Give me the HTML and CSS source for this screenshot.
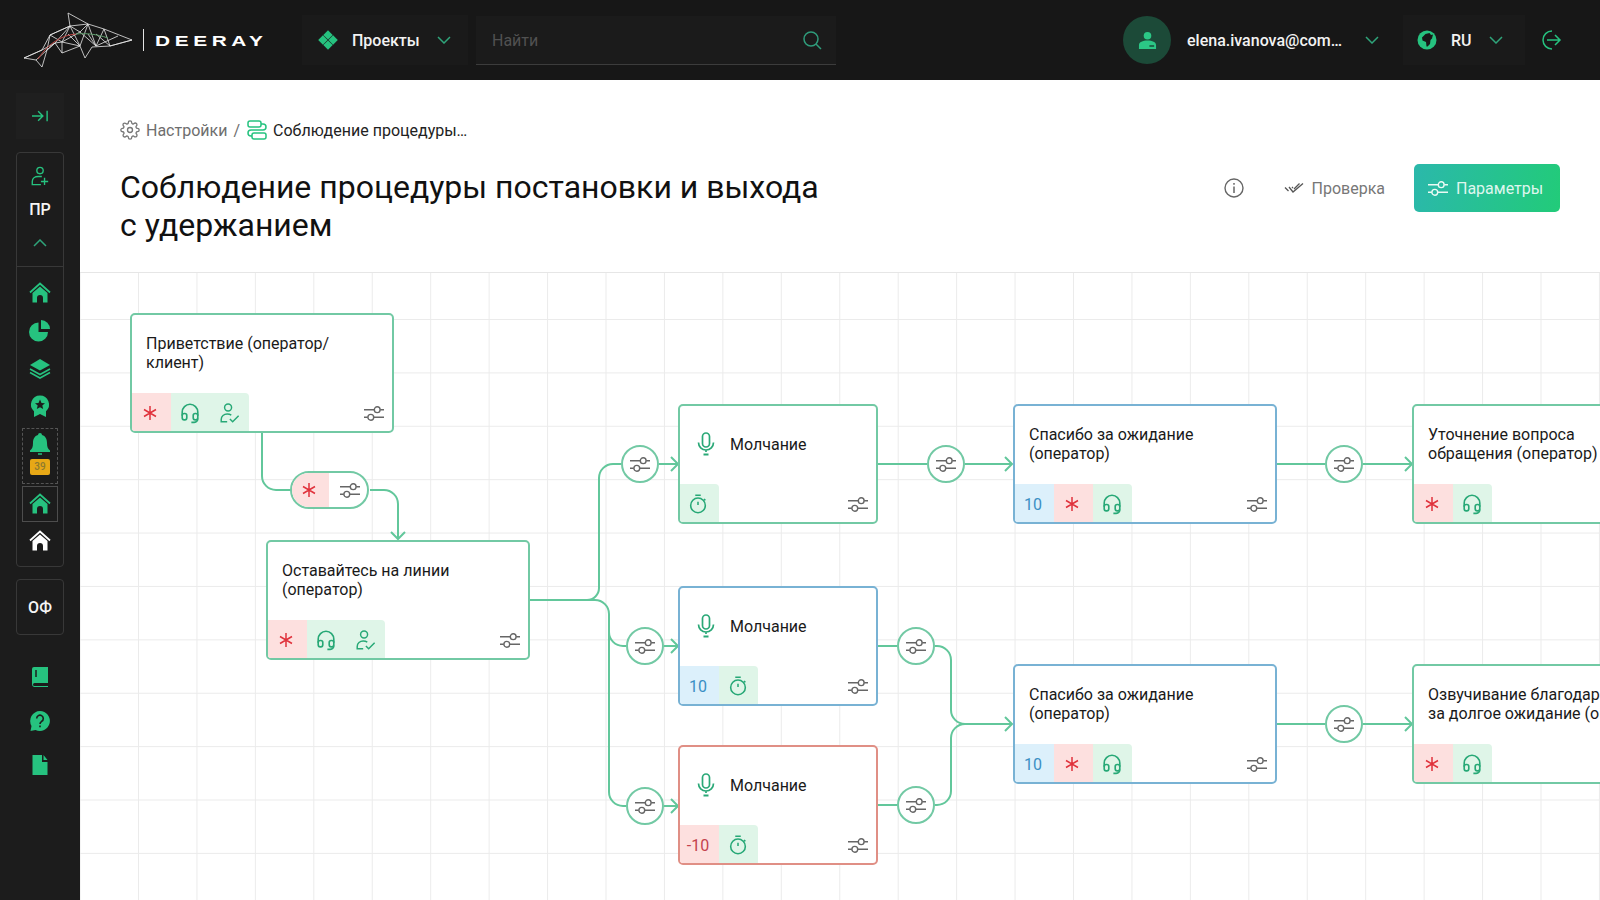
FILE: index.html
```html
<!DOCTYPE html>
<html lang="ru">
<head>
<meta charset="utf-8">
<title>Deeray</title>
<link rel="stylesheet" href="styles.css">
</head>
<body>
<svg class="defs" width="0" height="0" aria-hidden="true">
  <defs>
    <symbol id="i-sliders" viewBox="0 0 20 15"><path d="M0 3.7H10.2M16.2 3.7H20M0 11.3H3.8M9.8 11.3H20" fill="none" stroke="currentColor" stroke-width="1.5"/><circle cx="13.2" cy="3.7" r="2.9" fill="none" stroke="currentColor" stroke-width="1.4"/><circle cx="6.8" cy="11.3" r="2.9" fill="none" stroke="currentColor" stroke-width="1.4"/></symbol>
    <symbol id="i-star" viewBox="0 0 16 16"><path d="M8 1V15M2 4.500L14 11.500M14 4.500L2 11.500" fill="none" stroke="currentColor" stroke-width="1.500"/></symbol>
    <symbol id="i-head" viewBox="0 0 24 24"><g fill="none" stroke="currentColor" stroke-width="1.800"><path d="M3.500 15V11a8.500 8.500 0 0 1 17 0V15"/><rect x="3.500" y="12.500" width="5" height="7" rx="2.200"/><rect x="15.500" y="12.500" width="5" height="7" rx="2.200"/><path d="M20.500 18a4.500 4.500 0 0 1-4 4.300h-3"/></g></symbol>
    <symbol id="i-ucheck" viewBox="0 0 24 24"><g fill="none" stroke="currentColor" stroke-width="1.600"><circle cx="11" cy="6" r="3.800"/><path d="M10 21.500H3.500V19c0-3.500 3-5.800 6.500-5.800 1.800 0 3.300.4 4.500 1.200"/><path d="M13 18.500l3 3L22.500 15"/></g></symbol>
    <symbol id="i-timer" viewBox="0 0 24 24"><g fill="none" stroke="currentColor" stroke-width="1.700"><circle cx="12" cy="13.500" r="8"/><path d="M9 2.500H15M12 9.500V13M18.500 6.500L20 8"/></g></symbol>
    <symbol id="i-mic" viewBox="0 0 24 24"><g fill="none" stroke="currentColor" stroke-width="1.700"><rect x="8.500" y="1" width="7" height="14" rx="3.500"/><path d="M4.500 10.500a7.500 7.500 0 0 0 15 0M12 18v2"/><path d="M9.500 22.500H14.500" stroke-width="2"/></g></symbol>
    <symbol id="i-chev" viewBox="0 0 14 8"><path d="M1 1L7 7L13 1" fill="none" stroke="currentColor" stroke-width="1.500"/></symbol>
    <symbol id="i-home" viewBox="0 0 24 24"><path d="M4.500 12L12 5.500L19.500 12V21.500H15V17a3 3 0 0 0-6 0v4.500H4.500Z" fill="currentColor"/><path d="M2 11.500L12 2.500L22 11.500" fill="none" stroke="currentColor" stroke-width="1.800"/></symbol>
  </defs>
</svg>

<header class="topbar">
  <div class="brand">
    <svg class="shark" viewBox="0 0 110 58" aria-hidden="true">
      <g fill="none" stroke="#e8e8e8" stroke-width=".8">
        <path d="M108 28L80 17L64 12L44 1L46 14L26 23L18 38L0 46L12 48L18 55L23 38L31 31L38 41L38 30L56 34L61 46L68 35L86 34Z"/>
        <path d="M26 23L38 30L46 14L56 34L64 12L72 34L80 17L86 34L108 28M26 23L46 14L64 12M31 31L46 14M38 30L56 20L72 34M56 20L46 14M56 20L64 12M38 30L31 31L23 38M38 41L56 34M72 34L94 24M0 46L18 38M12 48L23 38M44 22L56 34M64 22L72 34M72 22L86 34M26 23L23 38M18 38L31 31"/>
      </g>
      <path d="M14 47C22 34 36 23 52 22" fill="none" stroke="#b8433f" stroke-width="1"/>
      <path d="M52 22C62 21 72 22 84 26" fill="none" stroke="#5d9c6a" stroke-width="1"/>
    </svg>
    <span class="brand-sep"></span>
    <span class="brand-name">DEERAY</span>
  </div>
  <div class="drop projects">
    <svg class="ic20 green" viewBox="0 0 20 20" aria-hidden="true"><path d="M10 0.200L14.700 4.900L10 9.600L5.300 4.900ZM4.900 5.300L9.600 10L4.900 14.700L0.200 10ZM15.100 5.300L19.800 10L15.100 14.700L10.400 10ZM10 10.400L14.700 15.100L10 19.800L5.300 15.100Z" fill="currentColor"/></svg>
    <span class="drop-label">Проекты</span>
    <svg class="chev" aria-hidden="true"><use href="#i-chev"/></svg>
  </div>
  <div class="search">
    <span class="search-text">Найти</span>
    <svg class="ic20 teal" viewBox="0 0 20 20" aria-hidden="true"><circle cx="9" cy="9" r="7" fill="none" stroke="currentColor" stroke-width="1.500"/><path d="M14 14L19 19" stroke="currentColor" stroke-width="1.500"/></svg>
  </div>
  <div class="top-right">
    <div class="drop user">
      <span class="avatar"><svg viewBox="0 0 20 20" aria-hidden="true"><circle cx="10" cy="5" r="4" fill="currentColor"/><path d="M1 19V15C1 11.500 5 10 10 10S19 11.500 19 15V19H1ZM12 15V16.500H17V15Z" fill="currentColor" fill-rule="evenodd"/></svg></span>
      <span class="drop-label email">elena.ivanova@com…</span>
      <svg class="chev" aria-hidden="true"><use href="#i-chev"/></svg>
    </div>
    <div class="drop lang">
      <svg class="ic20 green" viewBox="0 0 20 20" aria-hidden="true"><circle cx="10" cy="10" r="9.500" fill="currentColor"/><path d="M8.500 4L12.500 3L14 5L16 4.500L15 8.500L13.500 10L13 14L10.500 16.500H9.500L9 12L5.500 10.500L5 7.500Z" fill="#181818"/></svg>
      <span class="drop-label">RU</span>
      <svg class="chev" aria-hidden="true"><use href="#i-chev"/></svg>
    </div>
    <svg class="ic20 green logout" viewBox="0 0 20 20" aria-hidden="true"><path d="M10 1A9 9 0 0 0 10 19" fill="none" stroke="currentColor" stroke-width="1.500"/><path d="M5 10H18M13 5L18 10L13 15" fill="none" stroke="currentColor" stroke-width="1.500"/></svg>
  </div>
</header>

<div class="shell">
  <aside class="side">
    <div class="collapse"><svg viewBox="0 0 18 12" aria-hidden="true"><path d="M0 6H11M6.500 1L11.500 6L6.500 11M16 0.500V11.500" fill="none" stroke="currentColor" stroke-width="1.500"/></svg></div>
    <div class="side-box main-box">
      <div class="box-head">
        <svg class="ic20 green" viewBox="0 0 20 22" aria-hidden="true"><g fill="none" stroke="currentColor" stroke-width="1.500"><circle cx="10" cy="5" r="3.500"/><path d="M11 20.500H1.500V17C1.500 13.500 4.500 11.500 8 11.500H12"/><path d="M15 13V21M11 17H19"/></g></svg>
        <span class="box-title">ПР</span>
        <svg class="chev up" aria-hidden="true"><use href="#i-chev"/></svg>
      </div>
      <div class="box-items">
        <svg class="ic24 green" aria-hidden="true"><use href="#i-home"/></svg>
        <svg class="ic24 green" viewBox="0 0 24 24" aria-hidden="true"><path d="M10.500 4.500a9.500 9.500 0 1 0 9.500 9.500H10.500Z" fill="currentColor"/><path d="M13 2a9 9 0 0 1 9 9H13Z" fill="currentColor"/></svg>
        <svg class="ic24 green" viewBox="0 0 24 24" aria-hidden="true"><path d="M12 3L22 9L12 14.500L2 9Z" fill="currentColor"/><path d="M2 13L12 18.500L22 13M2 16.500L12 22L22 16.500" fill="none" stroke="currentColor" stroke-width="1.600"/></svg>
        <svg class="ic24 green badge" viewBox="0 0 24 24" aria-hidden="true"><path d="M12 1.500a9 9 0 0 1 6 15.700V23L12 20L6 23V17.200A9 9 0 0 1 12 1.500Z" fill="currentColor"/><path d="M12 5.500L13.500 9L17 9.300L14.300 11.600L15.200 15L12 13.200L8.800 15L9.700 11.600L7 9.300L10.500 9Z" fill="#1c1c1c"/></svg>
        <div class="bell-box">
          <svg class="ic24 green" viewBox="0 0 24 24" aria-hidden="true"><path d="M12 1a2 2 0 0 1 2 2c3.500 1 5 4 5 8 0 4 1 6 3 7.500V20H2V18.500C4 17 5 15 5 11 5 7 6.500 4 10 3a2 2 0 0 1 2-2Z" fill="currentColor"/><path d="M10 22H14" stroke="currentColor" stroke-width="1.500"/></svg>
          <span class="count">39</span>
        </div>
        <div class="home-box"><svg class="ic24 green" aria-hidden="true"><use href="#i-home"/></svg></div>
        <svg class="ic24 white" aria-hidden="true"><use href="#i-home"/></svg>
      </div>
    </div>
    <div class="side-box org">ОФ</div>
    <div class="side-links">
      <svg class="ic24 green" viewBox="0 0 24 24" aria-hidden="true"><path d="M6 2H20V18H6.500A1.500 1.500 0 0 0 6.500 21H20V22H6A3 3 0 0 1 4 19V4A2 2 0 0 1 6 2Z" fill="currentColor"/><path d="M8 5V12" stroke="#1c1c1c" stroke-width="1.500"/></svg>
      <svg class="ic24 green" viewBox="0 0 24 24" aria-hidden="true"><path d="M12 2a10 10 0 1 1-4.500 19L2.500 22L3.500 17A10 10 0 0 1 12 2Z" fill="currentColor"/><path d="M8.700 9.500a3.300 3.300 0 1 1 5 2.800c-1.200.8-1.700 1.400-1.700 2.700M12 16.500V18.300" fill="none" stroke="#1c1c1c" stroke-width="1.600"/></svg>
      <svg class="ic24 green" viewBox="0 0 24 24" aria-hidden="true"><path d="M4.500 2H14V9H19.500V22H4.500ZM15.500 2L19.500 7H15.500Z" fill="currentColor"/></svg>
    </div>
  </aside>

  <main class="page">
    <nav class="crumbs">
      <svg class="ic20 grey" viewBox="0 0 24 24" aria-hidden="true"><g fill="none" stroke="currentColor" stroke-width="1.600"><circle cx="12" cy="12" r="3"/><path d="M19.400 15a1.650 1.650 0 0 0 .33 1.820l.06.06a2 2 0 0 1 0 2.830 2 2 0 0 1-2.830 0l-.06-.06a1.650 1.650 0 0 0-1.820-.33 1.650 1.650 0 0 0-1 1.510V21a2 2 0 0 1-2 2 2 2 0 0 1-2-2v-.09A1.650 1.650 0 0 0 9 19.400a1.650 1.650 0 0 0-1.820.33l-.06.06a2 2 0 0 1-2.830 0 2 2 0 0 1 0-2.830l.06-.06a1.650 1.650 0 0 0 .33-1.820 1.650 1.650 0 0 0-1.510-1H3a2 2 0 0 1-2-2 2 2 0 0 1 2-2h.09A1.650 1.650 0 0 0 4.600 9a1.650 1.650 0 0 0-.33-1.820l-.06-.06a2 2 0 0 1 0-2.830 2 2 0 0 1 2.830 0l.06.06a1.650 1.650 0 0 0 1.820.33H9a1.650 1.650 0 0 0 1-1.510V3a2 2 0 0 1 2-2 2 2 0 0 1 2 2v.09a1.650 1.650 0 0 0 1 1.510 1.650 1.650 0 0 0 1.820-.33l.06-.06a2 2 0 0 1 2.830 0 2 2 0 0 1 0 2.830l-.06.06a1.650 1.650 0 0 0-.33 1.820V9a1.650 1.650 0 0 0 1.510 1H21a2 2 0 0 1 2 2 2 2 0 0 1-2 2h-.09a1.650 1.650 0 0 0-1.510 1z"/></g></svg>
      <span class="crumb-muted">Настройки</span>
      <span class="crumb-muted slash">/</span>
      <svg class="ic20 green" viewBox="0 0 20 20" aria-hidden="true"><g fill="none" stroke="currentColor" stroke-width="1.500"><rect x="1" y="1" width="13" height="6" rx="2"/><rect x="5" y="13" width="14" height="6" rx="2"/><path d="M14 4H16a3 3 0 0 1 0 6H4a3 3 0 0 0 0 6H5"/></g></svg>
      <span class="crumb-current">Соблюдение процедуры…</span>
    </nav>
    <div class="page-head">
      <h1>Соблюдение процедуры постановки и выхода<br>с удержанием</h1>
      <div class="actions">
        <svg class="ic20 info" viewBox="0 0 20 20" aria-hidden="true"><circle cx="10" cy="10" r="9" fill="none" stroke="currentColor" stroke-width="1.400"/><path d="M10 8.500V15M10 5V6.800" stroke="currentColor" stroke-width="1.500"/></svg>
        <div class="check-btn">
          <svg class="dbl" viewBox="0 0 20 12" aria-hidden="true"><path d="M1 5.500L4.500 9M5 5L9 10L19 1.500M8 5L9 6M10 7L15.500 1.500" fill="none" stroke="currentColor" stroke-width="1.300"/></svg>
          <span>Проверка</span>
        </div>
        <div class="param-btn">
          <svg class="sl" aria-hidden="true"><use href="#i-sliders"/></svg>
          <span>Параметры</span>
        </div>
      </div>
    </div>

    <section class="canvas">
      <svg class="links" viewBox="80 273 1520 627" aria-hidden="true">
        <g fill="none" stroke="#62c79b" stroke-width="2">
          <path d="M262 433V476a14 14 0 0 0 14 14H291"/>
          <path d="M370 490H384a14 14 0 0 1 14 14V539M391 532L398 539L405 532"/>
          <path d="M529 600H587a12 12 0 0 0 12-12V478a14 14 0 0 1 14-14H621"/>
          <path d="M659 464H678M671 457L678 464L671 471"/>
          <path d="M529 600H595a14 14 0 0 1 14 14V632a14 14 0 0 0 14 14H626"/>
          <path d="M664 646H678M671 639L678 646L671 653"/>
          <path d="M609 632V792a14 14 0 0 0 14 14H626"/>
          <path d="M664 806H678M671 799L678 806L671 813"/>
          <path d="M877 464H927M965 464H1012M1005 457L1012 464L1005 471"/>
          <path d="M877 646H897M935 646H937a14 14 0 0 1 14 14V710a14 14 0 0 0 14 14H1012M1005 717L1012 724L1005 731"/>
          <path d="M877 805H897M935 805H937a14 14 0 0 0 14-14V738a14 14 0 0 1 14-14"/>
          <path d="M1276 464H1325M1363 464H1412M1405 457L1412 464L1405 471"/>
          <path d="M1276 724H1325M1363 724H1412M1405 717L1412 724L1405 731"/>
        </g>
      </svg>

      <article class="node wide n1">
        <p class="node-title">Приветствие (оператор/<br>клиент)</p>
        <div class="node-foot">
          <div class="tags"><span class="tag red"><svg class="t-star"><use href="#i-star"/></svg></span><span class="tag green-bg"><svg class="t-ic"><use href="#i-head"/></svg></span><span class="tag green-bg"><svg class="t-ic"><use href="#i-ucheck"/></svg></span></div>
          <svg class="sl"><use href="#i-sliders"/></svg>
        </div>
      </article>

      <div class="pill">
        <span class="pill-l"><svg class="t-star"><use href="#i-star"/></svg></span>
        <span class="pill-r"><svg class="sl"><use href="#i-sliders"/></svg></span>
      </div>

      <article class="node wide n2">
        <p class="node-title">Оставайтесь на линии<br>(оператор)</p>
        <div class="node-foot">
          <div class="tags"><span class="tag red"><svg class="t-star"><use href="#i-star"/></svg></span><span class="tag green-bg"><svg class="t-ic"><use href="#i-head"/></svg></span><span class="tag green-bg"><svg class="t-ic"><use href="#i-ucheck"/></svg></span></div>
          <svg class="sl"><use href="#i-sliders"/></svg>
        </div>
      </article>

      <article class="node narrow m1">
        <div class="node-mic"><svg class="mic"><use href="#i-mic"/></svg><span>Молчание</span></div>
        <div class="node-foot">
          <div class="tags"><span class="tag green-bg"><svg class="t-ic"><use href="#i-timer"/></svg></span></div>
          <svg class="sl"><use href="#i-sliders"/></svg>
        </div>
      </article>

      <article class="node narrow blue m2">
        <div class="node-mic"><svg class="mic"><use href="#i-mic"/></svg><span>Молчание</span></div>
        <div class="node-foot">
          <div class="tags"><span class="tag blue-bg">10</span><span class="tag green-bg"><svg class="t-ic"><use href="#i-timer"/></svg></span></div>
          <svg class="sl"><use href="#i-sliders"/></svg>
        </div>
      </article>

      <article class="node narrow redline m3">
        <div class="node-mic"><svg class="mic"><use href="#i-mic"/></svg><span>Молчание</span></div>
        <div class="node-foot">
          <div class="tags"><span class="tag red num">-10</span><span class="tag green-bg"><svg class="t-ic"><use href="#i-timer"/></svg></span></div>
          <svg class="sl"><use href="#i-sliders"/></svg>
        </div>
      </article>

      <article class="node wide blue s1">
        <p class="node-title">Спасибо за ожидание<br>(оператор)</p>
        <div class="node-foot">
          <div class="tags"><span class="tag blue-bg">10</span><span class="tag red"><svg class="t-star"><use href="#i-star"/></svg></span><span class="tag green-bg"><svg class="t-ic"><use href="#i-head"/></svg></span></div>
          <svg class="sl"><use href="#i-sliders"/></svg>
        </div>
      </article>

      <article class="node wide blue s2">
        <p class="node-title">Спасибо за ожидание<br>(оператор)</p>
        <div class="node-foot">
          <div class="tags"><span class="tag blue-bg">10</span><span class="tag red"><svg class="t-star"><use href="#i-star"/></svg></span><span class="tag green-bg"><svg class="t-ic"><use href="#i-head"/></svg></span></div>
          <svg class="sl"><use href="#i-sliders"/></svg>
        </div>
      </article>

      <article class="node wide u1">
        <p class="node-title">Уточнение вопроса<br>обращения (оператор)</p>
        <div class="node-foot">
          <div class="tags"><span class="tag red"><svg class="t-star"><use href="#i-star"/></svg></span><span class="tag green-bg"><svg class="t-ic"><use href="#i-head"/></svg></span></div>
          <svg class="sl"><use href="#i-sliders"/></svg>
        </div>
      </article>

      <article class="node wide u2">
        <p class="node-title">Озвучивание благодарности<br>за долгое ожидание (оператор)</p>
        <div class="node-foot">
          <div class="tags"><span class="tag red"><svg class="t-star"><use href="#i-star"/></svg></span><span class="tag green-bg"><svg class="t-ic"><use href="#i-head"/></svg></span></div>
          <svg class="sl"><use href="#i-sliders"/></svg>
        </div>
      </article>

      <div class="joint j1"><svg class="sl"><use href="#i-sliders"/></svg></div>
      <div class="joint j2"><svg class="sl"><use href="#i-sliders"/></svg></div>
      <div class="joint j3"><svg class="sl"><use href="#i-sliders"/></svg></div>
      <div class="joint j4"><svg class="sl"><use href="#i-sliders"/></svg></div>
      <div class="joint j5"><svg class="sl"><use href="#i-sliders"/></svg></div>
      <div class="joint j6"><svg class="sl"><use href="#i-sliders"/></svg></div>
      <div class="joint j7"><svg class="sl"><use href="#i-sliders"/></svg></div>
      <div class="joint j8"><svg class="sl"><use href="#i-sliders"/></svg></div>
    </section>
  </main>
</div>
</body>
</html>
```
FILE: styles.css
```css
* { box-sizing: border-box; }
html, body { margin: 0; height: 100%; }
body {
  width: 1600px;
  height: 900px;
  overflow: hidden;
  display: flex;
  flex-direction: column;
  font-family: Roboto, "Liberation Sans", sans-serif;
  font-size: 16px;
  background: #fff;
  color: #111;
}
svg { display: block; flex: none; }
.defs { position: absolute; }

.green { color: #26c27f; }
.teal { color: #2f9c7b; }
.grey { color: #777; }
.white { color: #fff; }
.ic20 { width: 20px; height: 20px; }
.ic24 { width: 24px; height: 24px; }

/* top bar */
.topbar {
  flex: none;
  height: 80px;
  background: #171717;
  display: flex;
  align-items: center;
  padding-left: 24px;
  color: #fff;
}
.brand { display: flex; align-items: center; width: 278px; }
.shark { width: 110px; height: 58px; margin-top: 1px; }
.brand-sep { width: 1px; height: 22px; background: #e4e4e4; margin-left: 9px; }
.brand-name {
  display: inline-block;
  margin-left: 11px;
  font: 700 15px "Liberation Sans", sans-serif;
  letter-spacing: 3.3px;
  transform: scaleX(1.39);
  transform-origin: left center;
}
.drop { display: flex; align-items: center; height: 50px; background: #1a1a1a; }
.drop-label { font-weight: 500; color: #f2f2f2; }
.chev { width: 14px; height: 8px; color: #2fa47a; }
.chev.up { transform: rotate(180deg); }
.projects { width: 166px; padding-left: 16px; }
.projects .drop-label { margin-left: 14px; width: 85px; }
.search {
  width: 360px;
  height: 49px;
  margin-left: 8px;
  padding: 1px 14px 0 16px;
  display: flex;
  align-items: center;
  justify-content: space-between;
  background: #1b1b1b;
  border-bottom: 1px solid #3c3c3c;
}
.search-text { color: #515151; }
.top-right { margin-left: auto; display: flex; align-items: center; padding-right: 38px; }
.user { width: 272px; padding-left: 0; background: transparent; }
.avatar {
  width: 48px; height: 48px; border-radius: 50%;
  background: #1c4a38; color: #2bc785;
  display: flex; align-items: center; justify-content: center;
}
.avatar svg { width: 19px; height: 19px; }
.email { width: 178px; margin-left: 16px; }
.lang { width: 122px; padding-left: 14px; margin-left: 8px; }
.lang .drop-label { margin-left: 14px; width: 38px; }
.logout { margin-left: 17px; }

/* shell */
.shell { flex: 1; display: flex; min-height: 0; }

/* side */
.side {
  flex: none;
  width: 80px;
  background: #1c1c1c;
  display: flex;
  flex-direction: column;
  align-items: center;
  padding-top: 13px;
}
.collapse {
  width: 48px; height: 46px;
  background: #1f1f1f;
  color: #26c27f;
  display: flex; align-items: center; justify-content: center;
}
.collapse svg { width: 17px; height: 12px; }
.side-box { width: 48px; border: 1px solid #383838; border-radius: 4px; }
.main-box { margin-top: 13px; height: 415px; }
.box-head {
  height: 114px;
  border-bottom: 1px solid #383838;
  display: flex; flex-direction: column; align-items: center;
  padding-top: 13px;
}
.box-title { font-weight: 500; margin: 14px 0 20px; line-height: 19px; color: #f5f5f5; }
.box-items { display: flex; flex-direction: column; align-items: center; padding-top: 14px; gap: 13.4px; }
.badge { margin-top: 1px; }
.bell-box {
  width: 36px; height: 56px;
  margin-top: -4px;
  border: 1px dashed #555;
  border-radius: 1px;
  display: flex; flex-direction: column; align-items: center;
  padding-top: 3px;
}
.count {
  width: 20px; height: 16px; margin-top: 3px;
  background: #e7a816; border-radius: 2px;
  color: #8d7a2e; font-size: 10px; font-weight: 500; line-height: 16px; text-align: center;
}
.home-box {
  width: 36px; height: 36px;
  margin-top: -11px;
  border: 1px solid #4d4d4d;
  display: flex; align-items: center; justify-content: center;
}
.box-items > .white { margin-top: -6px; }
.org {
  margin-top: 12px;
  height: 56px;
  display: flex; align-items: center; justify-content: center;
  font-weight: 500; color: #f5f5f5;
}
.side-links { display: flex; flex-direction: column; align-items: center; gap: 20px; margin-top: 30px; }

/* page */
.page { flex: 1; min-width: 0; display: flex; flex-direction: column; }
.crumbs { display: flex; align-items: center; height: 20px; margin: 40px 0 0 40px; }
.crumb-muted { color: #6e6e6e; margin-left: 6px; }
.slash { margin: 0 7px 0 6px; }
.crumb-current { margin-left: 6px; color: #222; }
.page-head { display: flex; justify-content: space-between; height: 132px; padding: 28px 40px 0 40px; }
h1 { margin: 0; font-size: 32px; font-weight: 400; line-height: 38px; color: #111; }
.actions { display: flex; align-items: center; height: 48px; margin-top: -4px; }
.info { color: #666; }
.check-btn { display: flex; align-items: center; margin-left: 40px; color: #777; }
.dbl { width: 20px; height: 12px; margin-right: 8px; color: #555; }
.param-btn {
  width: 146px; height: 48px; margin-left: 29px;
  border-radius: 5px;
  background: linear-gradient(100deg, #2bb8ab, #22cb79);
  color: #dff6ee;
  display: flex; align-items: center; padding-left: 14px; gap: 8px;
}
.param-btn .sl { color: #eafaf4; }
.sl { width: 20px; height: 15px; color: #666; }

/* canvas */
.canvas {
  flex: 1;
  position: relative;
  overflow: hidden;
  border-top: 1px solid #e6e6e6;
  background-color: #fff;
  background-image:
    linear-gradient(to right, #ebebeb 1px, transparent 1px),
    linear-gradient(to bottom, #ebebeb 1px, transparent 1px);
  background-size: 58.45px 53.4px;
  background-position: 58px 46px;
}
.links { position: absolute; left: 0; top: 0; width: 1520px; height: 627px; }

.node {
  position: absolute;
  height: 120px;
  background: #fff;
  border: 2px solid #72c9a4;
  border-radius: 5px;
  display: flex;
  flex-direction: column;
  justify-content: space-between;
}
.node.blue { border-color: #78b2d4; }
.node.redline { border-color: #e08f85; }
.wide { width: 264px; }
.narrow { width: 200px; }
.node-title { margin: 19px 0 0 14px; line-height: 19px; font-size: 16px; white-space: nowrap; color: #1a1a1a; }
.node-mic { display: flex; align-items: center; margin: 26px 0 0 14px; color: #1a1a1a; }
.mic { width: 24px; height: 24px; color: #2aa877; margin-right: 12px; }
.node-foot { display: flex; justify-content: space-between; align-items: center; padding-right: 8px; }
.node-foot > .sl { margin-top: 2px; }
.tags { display: flex; height: 38px; border-radius: 0 4px 0 3px; overflow: hidden; }
.tag {
  width: 39px; height: 38px;
  padding: 2px 3px 0 0;
  display: flex; align-items: center; justify-content: center;
  color: #3a8fc4;
}
.tag.red { background: #fde0df; color: #e0323c; }
.tag.num { color: #c4434d; }
.green-bg { background: #dff5e8; color: #27a876; padding-right: 1px; }
.green-bg:first-child { padding-right: 3px; }
.blue-bg { background: #dcf0fb; }
.t-star { width: 16px; height: 16px; color: #e0323c; }
.t-ic { width: 22px; height: 22px; }

.n1 { left: 50px; top: 40px; }
.n2 { left: 186px; top: 267px; }
.m1 { left: 598px; top: 131px; }
.m2 { left: 598px; top: 313px; }
.m3 { left: 598px; top: 472px; }
.s1 { left: 933px; top: 131px; }
.s2 { left: 933px; top: 391px; }
.u1 { left: 1332px; top: 131px; }
.u2 { left: 1332px; top: 391px; }

.pill {
  position: absolute; left: 210px; top: 198px;
  width: 79px; height: 38px;
  border: 2px solid #72c9a4; border-radius: 19px;
  background: #fff; overflow: hidden;
  display: flex;
}
.pill-l { width: 37px; background: #fde0df; display: flex; align-items: center; justify-content: center; padding-right: 3px; }
.pill-r { flex: 1; display: flex; align-items: center; justify-content: center; padding-left: 3px; }

.joint {
  position: absolute;
  width: 38px; height: 38px;
  border: 2px solid #72c9a4; border-radius: 50%;
  background: #fff;
  display: flex; align-items: center; justify-content: center;
}
.j1 { left: 541px; top: 172px; }
.j2 { left: 546px; top: 354px; }
.j3 { left: 546px; top: 514px; }
.j4 { left: 847px; top: 172px; }
.j5 { left: 817px; top: 354px; }
.j6 { left: 817px; top: 513px; }
.j7 { left: 1245px; top: 172px; }
.j8 { left: 1245px; top: 432px; }
```
